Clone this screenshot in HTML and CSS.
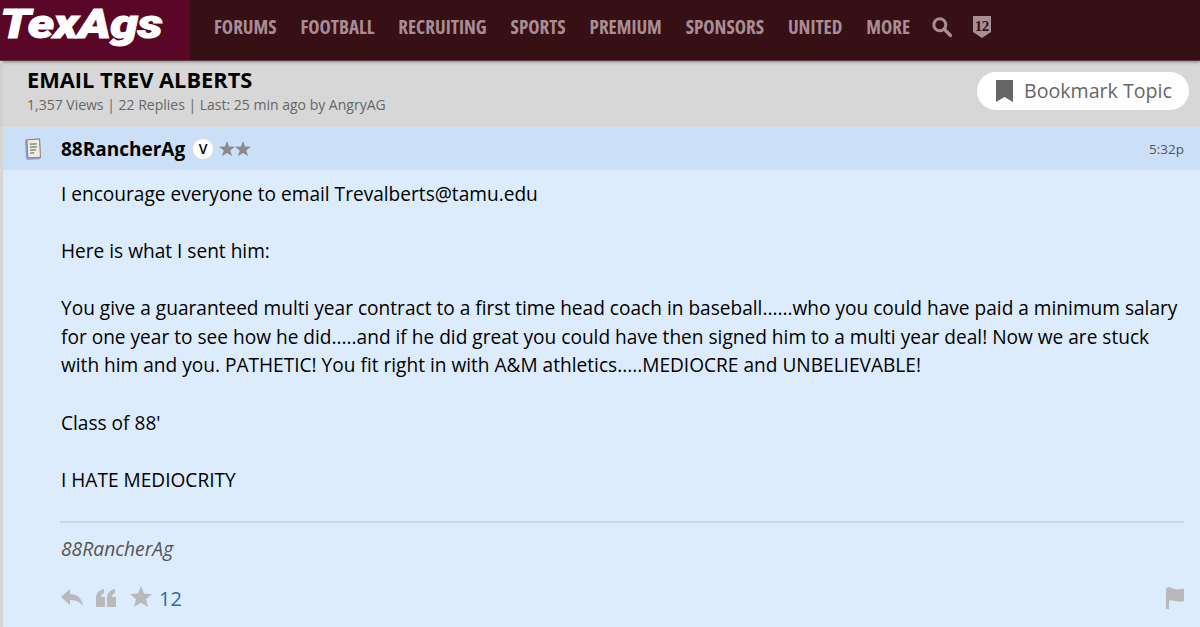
FILE: index.html
```html
<!DOCTYPE html>
<html lang="en">
<head>
<meta charset="UTF-8">
<title>EMAIL TREV ALBERTS | TexAgs</title>
<link rel="stylesheet" href="styles.css">
</head>
<body>

<!-- Top navigation -->
<header class="topbar">
  <div class="logo-box"><a class="logo" href="#">TexAgs</a></div>
  <nav class="nav">
    <a href="#">FORUMS</a>
    <a href="#">FOOTBALL</a>
    <a href="#">RECRUITING</a>
    <a href="#">SPORTS</a>
    <a href="#">PREMIUM</a>
    <a href="#">SPONSORS</a>
    <a href="#">UNITED</a>
    <a href="#">MORE</a>
    <svg class="nav-search" viewBox="0 0 20 20" width="20" height="20">
      <circle cx="7.800" cy="7.800" r="6" fill="none" stroke="#a98d94" stroke-width="3"/>
      <path d="M12.300 12.300l6.200 6.200" stroke="#a98d94" stroke-width="3.400" stroke-linecap="round"/>
    </svg>
    <span class="nav-badge">
      <svg viewBox="0 0 18 22" width="18" height="22">
        <path d="M0 0h18v16l-9 6-9-6z" fill="#a98d94"/>
      </svg>
      <span class="nav-badge-num">12</span>
    </span>
  </nav>
</header>

<!-- Topic title -->
<section class="topic-head">
  <div>
    <h1>EMAIL TREV ALBERTS</h1>
    <p>1,357 Views | 22 Replies | Last: 25 min ago by AngryAG</p>
  </div>
  <a class="bookmark" href="#">
    <svg viewBox="0 0 17 22" width="17" height="22"><path d="M0 0h17v22l-8.500-5-8.500 5z" fill="#666"/></svg>
    Bookmark Topic
  </a>
</section>

<!-- Post -->
<article class="post">
  <div class="post-head">
    <svg class="post-icon" viewBox="0 0 16 22" width="16" height="22">
      <g transform="rotate(-3 8 11)">
        <rect x="0.500" y="1" width="15" height="20.500" rx="2" fill="#8f9ccf"/>
        <rect x="2.500" y="1.500" width="12.500" height="18" fill="#efeee2" stroke="#8d8a78"/>
        <path d="M5 6h7M5 9h7M5 12h6M5 15h4" stroke="#77776f" stroke-width="1.200"/>
      </g>
    </svg>
    <strong class="post-user">88RancherAg</strong>
    <span class="badge-v">V</span>
    <svg class="stars" viewBox="0 0 32 16" width="32" height="16">
      <path d="M8 0l2 5.600 6 .2-4.700 3.700 1.700 5.800-5-3.400-5 3.400 1.700-5.800L0 5.800l6-.2z" fill="#8a8a8a"/>
      <path d="M24 0l2 5.600 6 .2-4.700 3.700 1.700 5.800-5-3.400-5 3.400 1.700-5.800-4.700-3.700 6-.2z" fill="#8a8a8a"/>
    </svg>
    <span class="post-time">5:32p</span>
  </div>
  <div class="post-body">
    <p>I encourage everyone to email Trevalberts@tamu.edu</p>
    <p>Here is what I sent him:</p>
    <p>You give a guaranteed multi year contract to a first time head coach in baseball......who you could have paid a minimum salary for one year to see how he did.....and if he did great you could have then signed him to a multi year deal! Now we are stuck with him and you. PATHETIC! You fit right in with A&amp;M athletics.....MEDIOCRE and UNBELIEVABLE!</p>
    <p>Class of 88'</p>
    <p>I HATE MEDIOCRITY</p>
  </div>
  <div class="post-sig">88RancherAg</div>
  <div class="post-actions">
    <svg viewBox="0 0 22 18" width="22" height="18"><path d="M0 8L9 0v5c7 0 12 4 13 12-3-4-7-6-13-6v5z" fill="#b9b9b9"/></svg>
    <svg viewBox="0 0 20 18" width="20" height="18"><path d="M0 18V9c0-5 3-8 8-9v4C6 5 5 6 5 8h4v10zM11 18V9c0-5 3-8 8-9v4c-2 1-3 2-3 4h4v10z" fill="#b9b9b9"/></svg>
    <svg class="like-star" viewBox="0 0 22 21" width="22" height="21"><path d="M11 0l3 7.500 8 .5-6 5.200 2 7.800-7-4.300-7 4.300 2-7.800-6-5.200 8-.5z" fill="#b9b9b9"/></svg>
    <span class="like-count">12</span>
    <svg class="flag" viewBox="0 0 18 22" width="18" height="22"><path d="M0 1c4-2 6 1 9 1 3 1 6 0 9-.500V14c-3 1-6 1-9 0-3-1-5-1-6 0v8H0z" fill="#b9b9b9"/></svg>
  </div>
</article>

</body>
</html>
```

FILE: styles.css
```css
body {
  margin: 0;
  height: 627px;
  overflow: hidden;
  background-color: #d7d7d7;
  font-family: "Open Sans", sans-serif;
  color: #000;
}
a {
  text-decoration: none;
}

/* Top navigation */
.topbar {
  display: flex;
  height: 60px;
  background-color: #371016;
  border-bottom: 1px solid #5a3a40;
  box-shadow: 0 1px 3px rgba(0, 0, 0, 0.4);
}
.logo-box {
  width: 190px;
  height: 60px;
  box-sizing: border-box;
  background-color: #5a0626;
}
.logo {
  display: inline-block;
  color: #fff;
  font-family: Roboto, sans-serif;
  font-size: 40px;
  font-weight: 900;
  font-style: italic;
  line-height: 50px;
  letter-spacing: -0.5px;
  -webkit-text-stroke: 1px #fff;
  transform: scaleX(1.25);
  transform-origin: left center;
}
.nav {
  display: flex;
  align-items: center;
  gap: 23.900px;
  padding: 0 0 7px 24px;
}
.nav a {
  color: #a98d94;
  font-size: 19px;
  font-weight: 700;
  font-stretch: 75%;
}
.nav-search {
  margin-left: -2px;
}
.nav-badge {
  position: relative;
  display: flex;
  margin-left: -3px;
}
.nav-badge-num {
  position: absolute;
  top: 2px;
  left: 2px;
  font-family: "Liberation Serif", serif;
  font-size: 15px;
  font-weight: 700;
  letter-spacing: -0.5px;
  color: #371016;
}

/* Topic title */
.topic-head {
  display: flex;
  justify-content: space-between;
  align-items: center;
  height: 66px;
  padding: 0 11px 7px 24px;
  border-left: 3px solid #cfcfcf;
  box-sizing: border-box;
}
.topic-head h1 {
  margin: 0;
  font-size: 21.800px;
  font-weight: 700;
  line-height: 26px;
}
.topic-head p {
  margin: 2px 0 0;
  font-size: 14px;
  color: #666;
}
.bookmark {
  display: flex;
  align-items: center;
  gap: 11px;
  width: 212px;
  height: 38px;
  box-sizing: border-box;
  padding-left: 19px;
  background-color: #fff;
  border-radius: 19px;
  color: #666;
  font-size: 19.600px;
}

/* Post */
.post {
  margin-left: 3px;
  height: 500px;
  background-color: #dcecfc;
}
.post-head {
  display: flex;
  align-items: center;
  height: 43px;
  padding: 0 16px 0 22px;
  background-color: #cbdff6;
}
.post-user {
  margin-left: 20px;
  font-size: 19px;
  font-weight: 700;
}
.badge-v {
  display: flex;
  align-items: center;
  justify-content: center;
  width: 20px;
  height: 20px;
  margin-left: 7px;
  background-color: #fff;
  border: 1px solid #ddd;
  border-radius: 50%;
  font-size: 14px;
  font-weight: 600;
}
.stars {
  margin-left: 5px;
}
.post-time {
  margin-left: auto;
  color: #555;
  font-size: 13.500px;
}
.post-body {
  padding: 9.500px 16px 0 58px;
  font-size: 19.100px;
  line-height: 28.650px;
  color: #000;
}
.post-body p {
  margin: 0 0 28.650px;
}
.post-sig {
  margin: -2.500px 16px 0 57px;
  padding: 12px 0 0 1px;
  border-top: 2px solid #c8d6e6;
  color: #555;
  font-size: 19.300px;
  font-style: italic;
}
.post-actions {
  display: flex;
  align-items: center;
  gap: 13px;
  padding: 23px 16px 0 58px;
}
.like-star {
  margin: -3px 0 0 1px;
}
.like-count {
  margin-left: -6px;
  color: #2a6ba8;
  font-size: 20px;
}
.flag {
  margin-left: auto;
}
```
